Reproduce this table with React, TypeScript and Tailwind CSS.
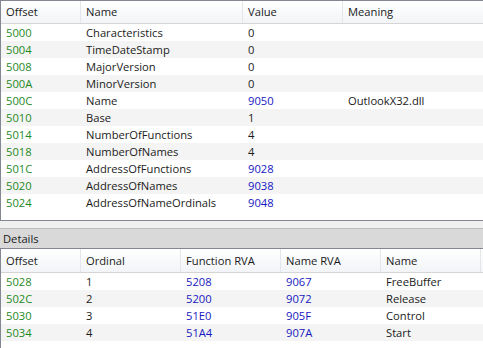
const topRows = [
  ['5000', 'Characteristics', '0', ''],
  ['5004', 'TimeDateStamp', '0', ''],
  ['5008', 'MajorVersion', '0', ''],
  ['500A', 'MinorVersion', '0', ''],
  ['500C', 'Name', '9050', 'OutlookX32.dll'],
  ['5010', 'Base', '1', ''],
  ['5014', 'NumberOfFunctions', '4', ''],
  ['5018', 'NumberOfNames', '4', ''],
  ['501C', 'AddressOfFunctions', '9028', ''],
  ['5020', 'AddressOfNames', '9038', ''],
  ['5024', 'AddressOfNameOrdinals', '9048', ''],
]

const bottomRows = [
  ['5028', '1', '5208', '9067', 'FreeBuffer'],
  ['502C', '2', '5200', '9072', 'Release'],
  ['5030', '3', '51E0', '905F', 'Control'],
  ['5034', '4', '51A4', '907A', 'Start'],
]

// values that are RVAs get drawn in blue
const isRva = (v: string) => v.length === 4

function HeaderCell({ label, w }: { label: string; w: string }) {
  return (
    <div className={`${w} flex h-full shrink-0 items-center border-r border-[#e3e6ea] pl-[5px] pt-[1px]`}>
      {label}
    </div>
  )
}

export default function App() {
  return (
    <div
      className="h-[348px] w-[483px] overflow-hidden bg-white text-[11.2px] text-[#1b1b1b]"
      style={{ fontFamily: '"Open Sans", "Noto Sans", sans-serif' }}
    >
      {/* export directory */}
      <div className="flex h-[221px] flex-col border-l border-t border-b border-[#828790]">
        <div className="flex h-[23px] shrink-0 border-b border-[#d5d5d5] bg-gradient-to-b from-white to-[#f2f4f7]">
          <HeaderCell label="Offset" w="w-[80px]" />
          <HeaderCell label="Name" w="w-[162px]" />
          <HeaderCell label="Value" w="w-[100px]" />
          <div className="flex h-full flex-1 items-center pl-[5px] pt-[1px]">Meaning</div>
        </div>
        {topRows.map((r, i) => (
          <div key={r[0]} className={`flex h-[17px] shrink-0 items-center pt-[1px] ${i % 2 ? 'bg-[#f4f4f4]' : 'bg-white'}`}>
            <div className="w-[80px] shrink-0 pl-[5px] text-[#1f8a1f]">{r[0]}</div>
            <div className="w-[162px] shrink-0 pl-[5px]">{r[1]}</div>
            <div className={`w-[100px] shrink-0 pl-[5px] ${r[2].length === 4 ? 'text-[#1818c0]' : ''}`}>{r[2]}</div>
            <div className="flex-1 pl-[5px]">{r[3]}</div>
          </div>
        ))}
      </div>

      <div className="h-[7px] bg-[#f0f0f0]" />

      <div className="flex h-[20px] items-center border-t border-[#bdbdbd] bg-[#d9d9d9] pl-[3px] pt-[1px]">Details</div>

      {/* exported functions */}
      <div className="flex h-[100px] flex-col border-l border-t border-[#828790]">
        <div className="flex h-[24px] shrink-0 border-b border-[#d5d5d5] bg-gradient-to-b from-white to-[#f2f4f7]">
          <HeaderCell label="Offset" w="w-[80px]" />
          <HeaderCell label="Ordinal" w="w-[100px]" />
          <HeaderCell label="Function RVA" w="w-[100px]" />
          <HeaderCell label="Name RVA" w="w-[100px]" />
          <HeaderCell label="Name" w="w-[100px]" />
          <div className="flex-1" />
        </div>
        {bottomRows.map((r, i) => (
          <div key={r[0]} className={`flex h-[17px] shrink-0 items-center pt-[1px] ${i % 2 ? 'bg-[#f4f4f4]' : 'bg-white'}`}>
            <div className="w-[80px] shrink-0 pl-[5px] text-[#1f8a1f]">{r[0]}</div>
            <div className="w-[100px] shrink-0 pl-[5px]">{r[1]}</div>
            <div className={`w-[100px] shrink-0 pl-[5px] ${isRva(r[2]) ? 'text-[#1818c0]' : ''}`}>{r[2]}</div>
            <div className="w-[100px] shrink-0 pl-[5px] text-[#1818c0]">{r[3]}</div>
            <div className="flex-1 pl-[5px]">{r[4]}</div>
          </div>
        ))}
      </div>
    </div>
  )
}
